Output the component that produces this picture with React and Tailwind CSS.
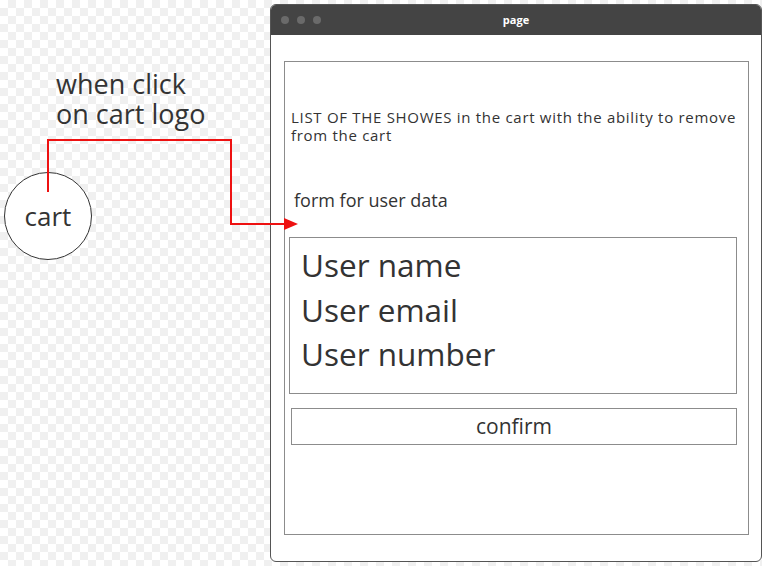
export default function App() {
  const font = { fontFamily: '"Open Sans", Lato, sans-serif' }
  return (
    <div
      className="relative w-[762px] h-[566px] overflow-hidden flex bg-white bg-[image:conic-gradient(#f0f0f0_25%,#ffffff_0_50%,#f0f0f0_0_75%,#ffffff_0)] bg-[length:16px_16px] text-[#333]"
      style={font}
    >
      {/* left side: note + cart circle */}
      <div className="w-[270px] shrink-0 flex flex-col">
        <div className="pl-[56px] pt-[69px] text-[27px] leading-[30px]">
          <div>when click</div>
          <div>on cart logo</div>
        </div>
        <div className="ml-[4px] mt-[43px] w-[88px] h-[88px] rounded-full border border-[#333] bg-white flex items-center justify-center text-[26px]">
          cart
        </div>
      </div>

      {/* the page window */}
      <div className="mt-[4px] w-[492px] h-[558px] flex flex-col rounded-[6px] border border-[#555] bg-white overflow-hidden">
        <div className="h-[30px] shrink-0 bg-[#444] grid grid-cols-[1fr_auto_1fr] items-center">
          <div className="flex gap-[8px] pl-[10px]">
            <span className="w-[8px] h-[8px] rounded-full bg-[#6a6a6a]" />
            <span className="w-[8px] h-[8px] rounded-full bg-[#6a6a6a]" />
            <span className="w-[8px] h-[8px] rounded-full bg-[#6a6a6a]" />
          </div>
          <div className="text-white text-[11px] font-bold">page</div>
          <div />
        </div>

        <div className="flex-1 flex flex-col pl-[13px] pr-[12px] pt-[26px] pb-[26px]">
          <div className="flex-1 flex flex-col border-[1.5px] border-[#8c8c8c]">
            <div className="pl-[6px] pr-[6px] pt-[46px] text-[15px] leading-[18px] tracking-[0.7px]">
              LIST OF THE SHOWES in the cart with the ability to remove from the cart
            </div>
            <div className="pl-[9px] mt-[45px] text-[18px] leading-[22px]">form for user data</div>

            <div className="ml-[4px] mr-[11px] mt-[26px] h-[157px] border border-[#8c8c8c] pl-[11px] pt-[5px] text-[31.5px] leading-[44.5px]">
              <div>User name</div>
              <div>User email</div>
              <div>User number</div>
            </div>

            <div className="ml-[6px] mr-[11px] mt-[14px] h-[37px] border border-[#8c8c8c] flex items-center justify-center text-[21px]">
              confirm
            </div>
          </div>
        </div>
      </div>

      {/* red connector from the cart to the form */}
      <svg className="absolute inset-0 pointer-events-none" width="762" height="566">
        <path d="M48 192 V140 H231 V224 H285" fill="none" stroke="#ee1111" strokeWidth="2" />
        <polygon points="284,218 298,224 284,230" fill="#ee1111" />
      </svg>
    </div>
  )
}
